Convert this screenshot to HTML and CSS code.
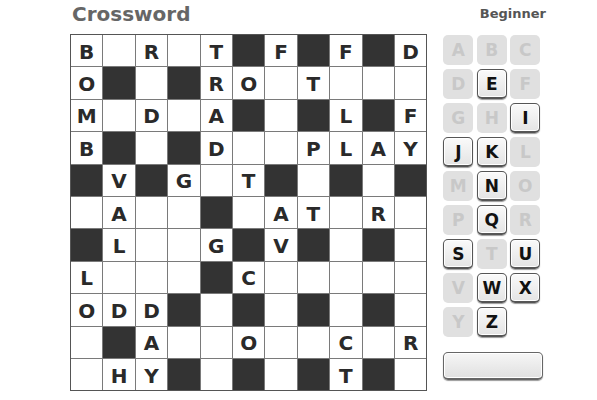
FILE: index.html
```html
<!DOCTYPE html>
<html>
<head>
<meta charset="utf-8">
<link rel="stylesheet" href="styles.css">
</head>
<body>
<div class="page">
  <div class="header">
    <div class="title">Crossword</div>
    <div class="level">Beginner</div>
  </div>
  <div class="main">
    <div class="board">
      <div class="c">B</div><div class="c"></div><div class="c">R</div><div class="c"></div><div class="c">T</div><div class="c b"></div><div class="c">F</div><div class="c b"></div><div class="c">F</div><div class="c b"></div><div class="c">D</div>
      <div class="c">O</div><div class="c b"></div><div class="c"></div><div class="c b"></div><div class="c">R</div><div class="c">O</div><div class="c"></div><div class="c">T</div><div class="c"></div><div class="c"></div><div class="c"></div>
      <div class="c">M</div><div class="c"></div><div class="c">D</div><div class="c"></div><div class="c">A</div><div class="c b"></div><div class="c"></div><div class="c b"></div><div class="c">L</div><div class="c b"></div><div class="c">F</div>
      <div class="c">B</div><div class="c b"></div><div class="c"></div><div class="c b"></div><div class="c">D</div><div class="c"></div><div class="c"></div><div class="c">P</div><div class="c">L</div><div class="c">A</div><div class="c">Y</div>
      <div class="c b"></div><div class="c">V</div><div class="c b"></div><div class="c">G</div><div class="c"></div><div class="c">T</div><div class="c b"></div><div class="c"></div><div class="c b"></div><div class="c"></div><div class="c b"></div>
      <div class="c"></div><div class="c">A</div><div class="c"></div><div class="c"></div><div class="c b"></div><div class="c"></div><div class="c">A</div><div class="c">T</div><div class="c"></div><div class="c">R</div><div class="c"></div>
      <div class="c b"></div><div class="c">L</div><div class="c"></div><div class="c"></div><div class="c">G</div><div class="c b"></div><div class="c">V</div><div class="c b"></div><div class="c"></div><div class="c b"></div><div class="c"></div>
      <div class="c">L</div><div class="c"></div><div class="c"></div><div class="c"></div><div class="c b"></div><div class="c">C</div><div class="c"></div><div class="c"></div><div class="c"></div><div class="c"></div><div class="c"></div>
      <div class="c">O</div><div class="c">D</div><div class="c">D</div><div class="c b"></div><div class="c"></div><div class="c b"></div><div class="c"></div><div class="c b"></div><div class="c"></div><div class="c b"></div><div class="c"></div>
      <div class="c"></div><div class="c b"></div><div class="c">A</div><div class="c"></div><div class="c"></div><div class="c">O</div><div class="c"></div><div class="c"></div><div class="c">C</div><div class="c"></div><div class="c">R</div>
      <div class="c"></div><div class="c">H</div><div class="c">Y</div><div class="c b"></div><div class="c"></div><div class="c b"></div><div class="c"></div><div class="c b"></div><div class="c">T</div><div class="c b"></div><div class="c"></div>
    </div>
    <div class="side">
      <div class="keys">
        <div class="k off">A</div><div class="k off">B</div><div class="k off">C</div>
        <div class="k off">D</div><div class="k">E</div><div class="k off">F</div>
        <div class="k off">G</div><div class="k off">H</div><div class="k">I</div>
        <div class="k">J</div><div class="k">K</div><div class="k off">L</div>
        <div class="k off">M</div><div class="k">N</div><div class="k off">O</div>
        <div class="k off">P</div><div class="k">Q</div><div class="k off">R</div>
        <div class="k">S</div><div class="k off">T</div><div class="k">U</div>
        <div class="k off">V</div><div class="k">W</div><div class="k">X</div>
        <div class="k off">Y</div><div class="k">Z</div>
      </div>
      <div class="btn"></div>
    </div>
  </div>
</div>
</body>
</html>
```
FILE: styles.css
```css
html, body {
  margin: 0;
  padding: 0;
  background: #ffffff;
}
.page {
  width: 597px;
  height: 400px;
  font-family: "DejaVu Sans", Verdana, sans-serif;
}
.header {
  display: flex;
  justify-content: space-between;
  align-items: flex-end;
  height: 26px;
  padding: 0 51px 0 72px;
}
.title {
  font-size: 20px;
  font-weight: bold;
  color: #666666;
  line-height: 24px;
}
.level {
  font-size: 13px;
  font-weight: bold;
  color: #555555;
  line-height: 16px;
  padding-bottom: 4px;
}
.main {
  display: flex;
  padding: 8px 0 0 70px;
}
.board {
  display: grid;
  grid-template-columns: repeat(11, 31.4px);
  grid-template-rows: repeat(11, 31.4px);
  gap: 1px;
  background: #7a7a7a;
  border: 1px solid #555555;
}
.c {
  background: #ffffff;
  display: flex;
  align-items: center;
  justify-content: center;
  font-size: 20px;
  font-weight: bold;
  color: #2a2a2a;
  padding-top: 2px;
  box-sizing: border-box;
}
.c.b {
  background: #333333;
}
.side {
  margin-left: 16px;
  padding-top: 1px;
  display: flex;
  flex-direction: column;
}
.keys {
  display: grid;
  grid-template-columns: repeat(3, 30px);
  grid-auto-rows: 30px;
  column-gap: 3.5px;
  row-gap: 4px;
}
.k {
  box-sizing: border-box;
  border: 1px solid #555555;
  border-bottom-width: 2.5px;
  border-radius: 5px;
  background: linear-gradient(#fafafa, #e4e4e4);
  box-shadow: inset 0 0 0 1px #ffffff, 0 1px 1px #999999;
  display: flex;
  align-items: center;
  justify-content: center;
  font-size: 17px;
  font-weight: bold;
  color: #111111;
}
.k.off {
  border: none;
  background: #e0e0e0;
  box-shadow: none;
  color: #c8c8c8;
}
.btn {
  margin-top: 15px;
  width: 100px;
  height: 28px;
  box-sizing: border-box;
  border: 1px solid #666666;
  border-bottom-width: 2.5px;
  border-radius: 5px;
  background: linear-gradient(#f6f6f6, #e0e0e0);
  box-shadow: inset 0 0 0 1px #ffffff, 0 1px 1px #999999;
}
```
